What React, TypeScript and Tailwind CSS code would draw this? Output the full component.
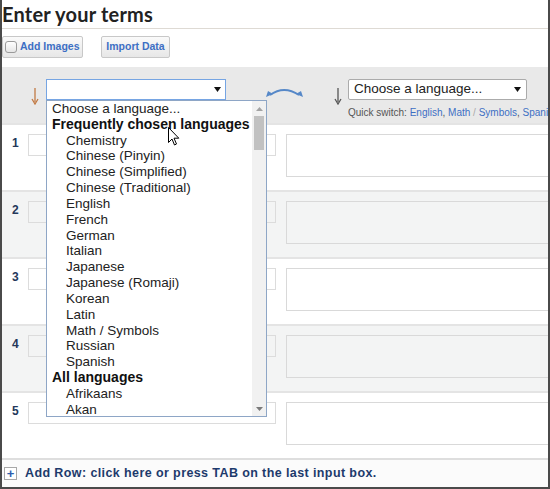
import React from "react";

const frequent = [
  "Chemistry",
  "Chinese (Pinyin)",
  "Chinese (Simplified)",
  "Chinese (Traditional)",
  "English",
  "French",
  "German",
  "Italian",
  "Japanese",
  "Japanese (Romaji)",
  "Korean",
  "Latin",
  "Math / Symbols",
  "Russian",
  "Spanish",
];

const allLangs = ["Afrikaans", "Akan"];

function DownArrow({ color }: { color: string }) {
  return (
    <svg width="8" height="17" viewBox="0 0 8 17" className="shrink-0">
      <line x1="4" y1="0" x2="4" y2="14" stroke={color} strokeWidth="1.3" />
      <path d="M1 11 L4 16 L7 11" fill="none" stroke={color} strokeWidth="1.3" />
    </svg>
  );
}

function Caret() {
  return (
    <svg width="7" height="5" viewBox="0 0 7 5" className="shrink-0">
      <path d="M0 0 L7 0 L3.5 5 Z" fill="#111" />
    </svg>
  );
}

function SwapIcon() {
  return (
    <svg width="37" height="11" viewBox="0 0 37 11" className="shrink-0">
      <path d="M4 8 Q18 -2 33 8" fill="none" stroke="#5688c8" strokeWidth="2" />
      <path d="M0 10 L2 4 L7 7 Z" fill="#5688c8" />
      <path d="M37 10 L35 4 L30 7 Z" fill="#5688c8" />
    </svg>
  );
}

function Cursor() {
  return (
    <svg width="12" height="19" viewBox="0 0 12 19">
      <path
        d="M0.5 0.5 L0.5 15.5 L4 12 L6.5 18 L8.5 17 L6 11.2 L10.8 11.2 Z"
        fill="#fff"
        stroke="#000"
        strokeWidth="1"
        strokeLinejoin="round"
      />
    </svg>
  );
}

function Row({ n, shaded }: { n: number; shaded: boolean }) {
  const bg = shaded ? "bg-[#f3f4f4]" : "bg-white";
  return (
    <div className={`h-[67px] border-t-2 border-[#e4e4e4] ${bg} flex items-start pt-[9px] overflow-hidden`}>
      <div className="w-[26px] shrink-0 pl-[10px] h-[22px] leading-[18px] text-[12px] font-bold text-[#24385a]">
        {n}
      </div>
      <div className={`w-[248px] h-[22px] shrink-0 border border-[#dcdcdc] ${bg}`} />
      <div className={`ml-[10px] w-[300px] h-[43px] shrink-0 border border-[#d9d9d9] ${bg}`} />
    </div>
  );
}

export default function App() {
  return (
    <div
      className="relative w-[550px] h-[489px] overflow-hidden bg-white border-l-2 border-r-2 border-b-2 border-[#4a4a4a]"
      style={{ fontFamily: '"Liberation Sans", Arial, sans-serif' }}
    >
      {/* title */}
      <div
        className="h-[28px] leading-[28px] text-[20px] font-bold text-[#222] tracking-[0.2px] border-b border-[#dedad4] box-content"
        style={{ fontFamily: "Lato, sans-serif" }}
      >
        Enter your terms
      </div>

      {/* buttons */}
      <div className="h-[38px] pt-[7px] flex items-start">
        <button className="h-[22px] w-[81px] flex items-center rounded-[2px] border border-[#c8c8c8] bg-gradient-to-b from-[#fafafa] to-[#e7e7e7] text-[10.5px] font-bold text-[#3d6fc4]">
          <span className="ml-[2px] w-[12px] h-[12px] rounded-[3px] border border-[#9a9a9a] bg-gradient-to-b from-white to-[#e6e6e6]" />
          <span className="ml-[3px]">Add Images</span>
        </button>
        <button className="ml-[18px] h-[22px] w-[69px] flex items-center justify-center rounded-[2px] border border-[#c8c8c8] bg-gradient-to-b from-[#fafafa] to-[#e7e7e7] text-[10.5px] font-bold text-[#3d6fc4]">
          Import Data
        </button>
      </div>

      {/* language bar */}
      <div className="h-[56px] bg-[#e9e9e9] flex items-start pl-[29px] overflow-hidden">
        <div className="mt-[21px] shrink-0">
          <DownArrow color="#c27a44" />
        </div>
        <div className="ml-[7px] mt-[12px] w-[180px] h-[21px] shrink-0 bg-white border border-[#76a5e3] flex items-center justify-end pr-[4px]">
          <Caret />
        </div>
        <div className="ml-[40px] mt-[20px] shrink-0">
          <SwapIcon />
        </div>
        <div className="ml-[31px] mt-[21px] shrink-0">
          <DownArrow color="#555" />
        </div>
        <div className="ml-[6px] mt-[12px] w-[179px] shrink-0 flex flex-col">
          <div className="w-[179px] h-[21px] bg-white border border-[#ababab] rounded-[2px] flex items-center justify-between pl-[5px] pr-[5px] text-[13.5px] text-[#222]">
            <span>Choose a language...</span>
            <Caret />
          </div>
          <div className="mt-[7px] text-[10px] leading-[12px] whitespace-nowrap text-[#555]">
            Quick switch: <span className="text-[#3d6fc4]">English</span>,{" "}
            <span className="text-[#3d6fc4]">Math</span> <span className="text-[#aaa]">/</span>{" "}
            <span className="text-[#3d6fc4]">Symbols</span>, <span className="text-[#3d6fc4]">Spanish</span>
          </div>
        </div>
      </div>

      {/* rows */}
      {[1, 2, 3, 4, 5].map((n) => (
        <Row key={n} n={n} shaded={n % 2 === 0} />
      ))}

      {/* add row */}
      <div className="h-[29px] border-t-2 border-[#dedede] bg-[#fbfbfb] flex items-center">
        <span className="ml-[2px] w-[13px] h-[13px] border border-[#a8a8a8] bg-white flex items-center justify-center text-[13px] leading-none font-bold text-[#2d5eae]">
          +
        </span>
        <span className="ml-[8px] text-[12.5px] font-bold tracking-[0.4px] text-[#1d3a6c] whitespace-nowrap">
          Add Row: click here or press TAB on the last input box.
        </span>
      </div>

      {/* open dropdown list */}
      <div className="absolute left-[44px] top-[100px] w-[221px] h-[317px] bg-white border border-[#8ea6c6] flex overflow-hidden">
        <div className="flex-1 overflow-hidden text-[13.5px] text-[#222]">
          <div className="h-[15.84px] leading-[15.84px] pl-[5px]">Choose a language...</div>
          <div className="h-[15.84px] leading-[15.84px] pl-[5px] font-bold text-[14px] text-[#111] whitespace-nowrap">
            Frequently chosen languages
          </div>
          {frequent.map((l) => (
            <div key={l} className="h-[15.84px] leading-[15.84px] pl-[19px]">
              {l}
            </div>
          ))}
          <div className="h-[15.84px] leading-[15.84px] pl-[5px] font-bold text-[14px] text-[#111]">All languages</div>
          {allLangs.map((l) => (
            <div key={l} className="h-[15.84px] leading-[15.84px] pl-[19px]">
              {l}
            </div>
          ))}
        </div>
        <div className="w-[14px] shrink-0 bg-[#f1f1f1] flex flex-col items-center">
          <div className="h-[15px] flex items-center justify-center">
            <svg width="7" height="4" viewBox="0 0 7 4">
              <path d="M0 4 L7 4 L3.5 0 Z" fill="#a3a3a3" />
            </svg>
          </div>
          <div className="w-[10px] h-[34px] bg-[#c1c1c1]" />
          <div className="flex-1" />
          <div className="h-[15px] flex items-center justify-center">
            <svg width="7" height="4" viewBox="0 0 7 4">
              <path d="M0 0 L7 0 L3.5 4 Z" fill="#7a7a7a" />
            </svg>
          </div>
        </div>
      </div>

      {/* mouse pointer */}
      <div className="absolute left-[166px] top-[127px]">
        <Cursor />
      </div>
    </div>
  );
}
